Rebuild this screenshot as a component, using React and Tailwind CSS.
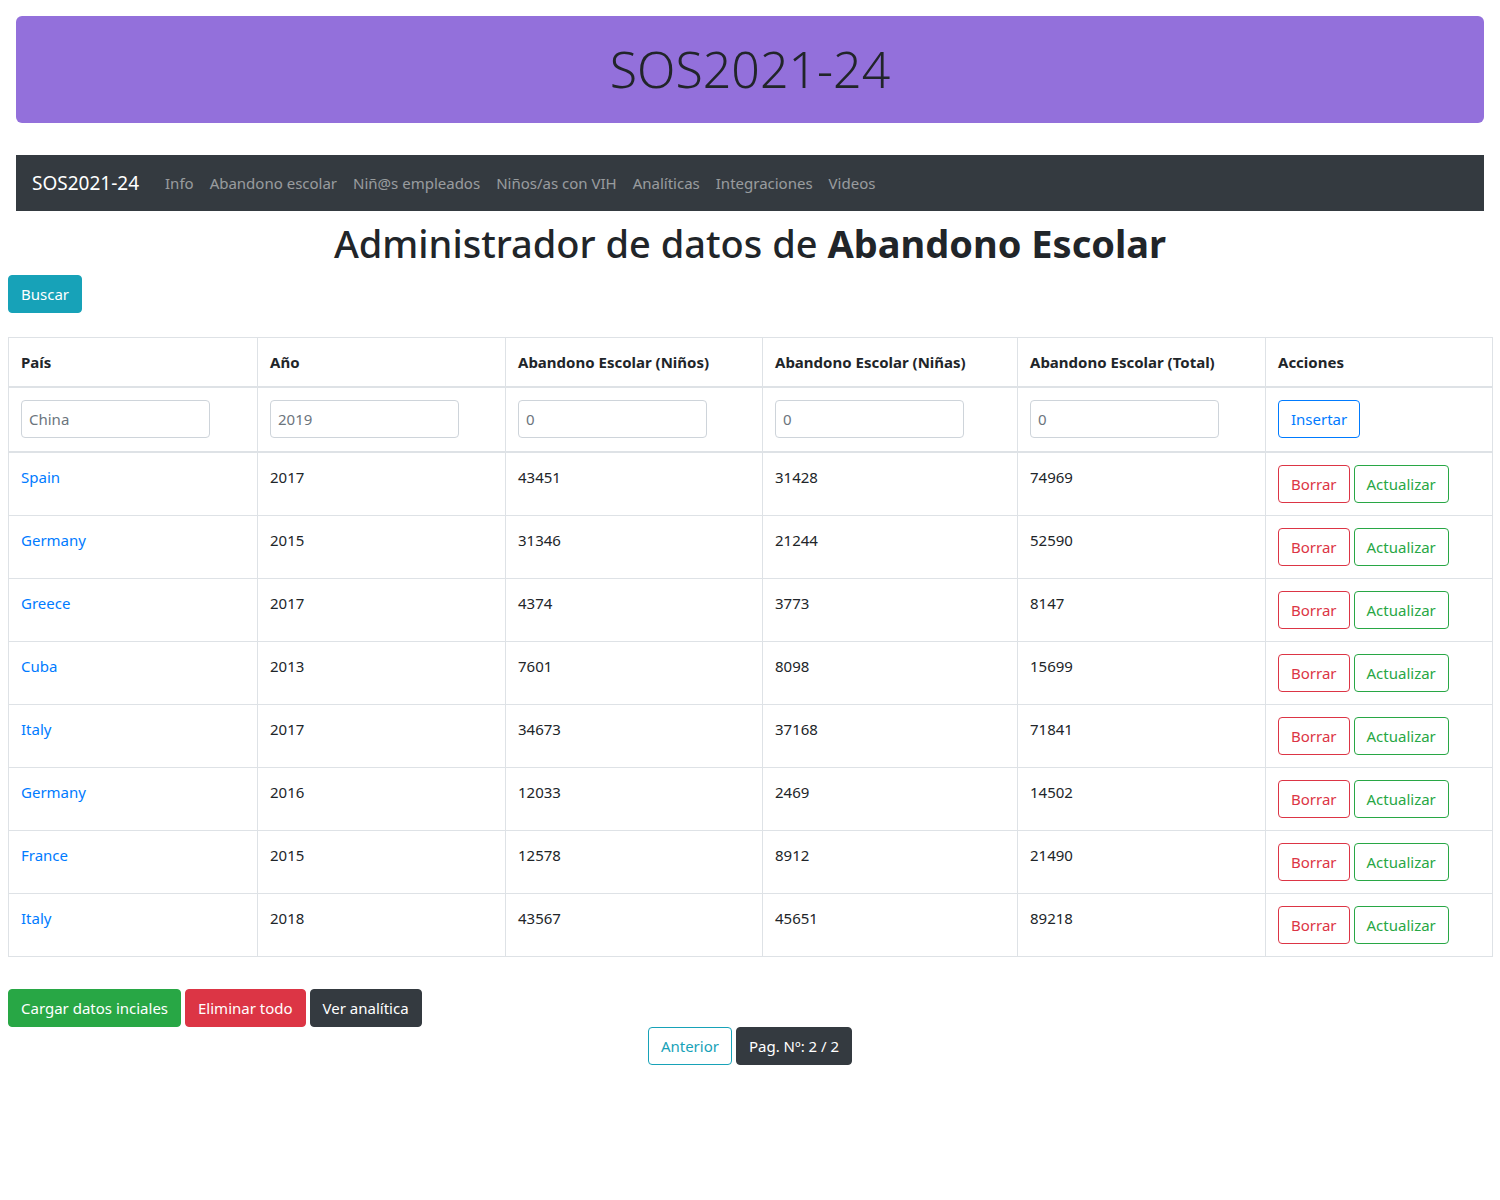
import React from 'react';

const rows = [
  ['Spain', 2017, 43451, 31428, 74969],
  ['Germany', 2015, 31346, 21244, 52590],
  ['Greece', 2017, 4374, 3773, 8147],
  ['Cuba', 2013, 7601, 8098, 15699],
  ['Italy', 2017, 34673, 37168, 71841],
  ['Germany', 2016, 12033, 2469, 14502],
  ['France', 2015, 12578, 8912, 21490],
  ['Italy', 2018, 43567, 45651, 89218],
];

const navLinks = ['Info', 'Abandono escolar', 'Niñ@s empleados', 'Niños/as con VIH', 'Analíticas', 'Integraciones', 'Videos'];

const cell = 'border border-[#dee2e6] px-3 py-3 align-top';
const inputCell = 'border border-b-2 border-[#dee2e6] px-3 pt-3 pb-[13px] align-top';
const input = 'w-[189px] h-[38px] border border-[#ced4da] rounded pl-[7px] pr-3 text-[15px] text-[#495057] placeholder:text-[#6c757d] bg-white outline-none';
const btn = 'inline-block border rounded px-3 py-1.5 text-[15px] leading-6';

const App = () => {
  return (
    <div className="min-h-[1200px] bg-white p-2 text-[#212529] font-['Noto_Sans',sans-serif] text-[15px] leading-6">
      {/* Jumbotron */}
      <div className="mx-2 mt-2 mb-8 rounded-md bg-[#9370db] py-5 text-center">
        <h1 className="text-[50px] leading-[67px] font-light">SOS2021-24</h1>
      </div>

      {/* Navbar */}
      <nav className="mx-2 flex h-14 items-center bg-[#343a40] px-4">
        <span className="mr-[18px] text-[19px] text-white">SOS2021-24</span>
        <div className="flex">
          {navLinks.map((l) => (
            <a key={l} className="px-2 text-white/50">{l}</a>
          ))}
        </div>
      </nav>

      <h1 className="mt-2 mb-2 text-center text-[38px] leading-[48px] font-medium">
        Administrador de datos de <strong className="font-bold">Abandono Escolar</strong>
      </h1>

      <button className={`${btn} border-[#17a2b8] bg-[#17a2b8] text-white`}>Buscar</button>

      {/* Table */}
      <table className="mt-6 w-[1484px] table-fixed border-collapse">
        <colgroup>
          <col className="w-[249px]" />
          <col className="w-[248px]" />
          <col className="w-[257px]" />
          <col className="w-[255px]" />
          <col className="w-[248px]" />
          <col className="w-[227px]" />
        </colgroup>
        <thead>
          <tr className="text-left">
            {['País', 'Año', 'Abandono Escolar (Niños)', 'Abandono Escolar (Niñas)', 'Abandono Escolar (Total)', 'Acciones'].map((h) => (
              <th key={h} className={`${cell} border-b-2 font-bold`}>{h}</th>
            ))}
          </tr>
        </thead>
        <tbody>
          <tr>
            <td className={inputCell}><input className={input} placeholder="China" /></td>
            <td className={inputCell}><input className={input} placeholder="2019" /></td>
            <td className={inputCell}><input className={input} placeholder="0" /></td>
            <td className={inputCell}><input className={input} placeholder="0" /></td>
            <td className={inputCell}><input className={input} placeholder="0" /></td>
            <td className={inputCell}>
              <button className={`${btn} border-[#007bff] text-[#007bff]`}>Insertar</button>
            </td>
          </tr>
          {rows.map((r, i) => (
            <tr key={i}>
              <td className={cell}><a className="text-[#007bff]">{r[0]}</a></td>
              <td className={cell}>{r[1]}</td>
              <td className={cell}>{r[2]}</td>
              <td className={cell}>{r[3]}</td>
              <td className={cell}>{r[4]}</td>
              <td className={cell}>
                <div className="flex gap-1">
                  <button className={`${btn} border-[#dc3545] text-[#dc3545]`}>Borrar</button>
                  <button className={`${btn} border-[#28a745] text-[#28a745]`}>Actualizar</button>
                </div>
              </td>
            </tr>
          ))}
        </tbody>
      </table>

      {/* Bottom actions */}
      <div className="mt-8 flex gap-1">
        <button className={`${btn} border-[#28a745] bg-[#28a745] text-white`}>Cargar datos inciales</button>
        <button className={`${btn} border-[#dc3545] bg-[#dc3545] text-white`}>Eliminar todo</button>
        <button className={`${btn} border-[#343a40] bg-[#343a40] text-white`}>Ver analítica</button>
      </div>
      <div className="flex justify-center gap-1">
        <button className={`${btn} border-[#17a2b8] text-[#17a2b8]`}>Anterior</button>
        <button className={`${btn} border-[#343a40] bg-[#343a40] text-white`}>Pag. Nº: 2 / 2</button>
      </div>
    </div>
  );
};

export default App;
